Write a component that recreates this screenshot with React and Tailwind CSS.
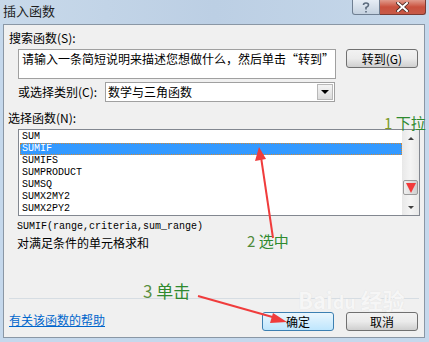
import React from 'react'

const functions = ['SUM', 'SUMIF', 'SUMIFS', 'SUMPRODUCT', 'SUMSQ', 'SUMX2MY2', 'SUMX2PY2']

export default function App() {
  return (
    <div className="relative w-[429px] h-[342px] overflow-hidden bg-[#c5d8ec] font-['Noto_Sans_CJK_SC','Liberation_Sans',sans-serif] text-[12px] leading-[16px] text-black">
      <TitleBar />

      <div className="ml-[3px] w-[422px] h-[314px] border border-[#8a97a5] bg-[#f0f0f0] flex flex-col">
        <div className="pl-[5px] mt-[5px]">搜索函数(S):</div>
        <div className="flex items-start pl-[14px] mt-[3px]">
          <div className="w-[318px] h-[30px] border border-[#a0a0a0] bg-white pl-[3px] pt-[1px] whitespace-nowrap overflow-hidden">
            请输入一条简短说明来描述您想做什么，然后单击“转到”
          </div>
          <Button className="ml-[10px]">转到(G)</Button>
        </div>

        <div className="flex items-center pl-[14px] mt-[3px]">
          <span className="w-[87px]">或选择类别(C):</span>
          <div className="w-[230px] h-[20px] border border-[#a0a0a0] bg-white flex items-center">
            <span className="pl-[2px] flex-1">数学与三角函数</span>
            <div className="w-[16px] h-[16px] mr-[1px] border border-[#b8b8b8] bg-gradient-to-b from-[#f4f4f4] to-[#dcdcdc] flex items-center justify-center">
              <div className="w-0 h-0 border-l-[4px] border-r-[4px] border-t-[4px] border-l-transparent border-r-transparent border-t-black" />
            </div>
          </div>
        </div>

        <div className="pl-[4px] mt-[8px]">选择函数(N):</div>

        <div className="ml-[14px] mt-[3px] w-[402px] h-[87px] border border-[#828790] bg-white flex">
          <div className="flex-1 pl-[1px] pt-[1px]">
            {functions.map((name) => (
              <div
                key={name}
                className={`h-[12px] pl-[2px] font-['Liberation_Mono',monospace] text-[10px] leading-[12px] ${
                  name === 'SUMIF' ? 'bg-[#3399ff] text-white outline-1 outline-dotted outline-[#d08a3a] -outline-offset-1' : ''
                }`}
              >
                {name}
              </div>
            ))}
          </div>
          <Scrollbar />
        </div>

        <div className="pl-[13px] mt-[4px] font-['Liberation_Mono',monospace] text-[10px] leading-[14px]">
          SUMIF(range,criteria,sum_range)
        </div>
        <div className="pl-[13px] mt-[1px]">对满足条件的单元格求和</div>

        <div className="mt-auto mx-[5px] h-px bg-[#d6dde3]" />
        <div className="flex items-start mt-[13px] mb-[6px] pl-[5px] pr-[6px]">
          <a className="text-[#0066cc] underline">有关该函数的帮助</a>
          <Button className="ml-auto" primary>确定</Button>
          <Button className="ml-[12px]">取消</Button>
        </div>
      </div>

      <Annotations />
    </div>
  )
}

function TitleBar() {
  return (
    <div className="h-[24px] flex items-start bg-gradient-to-r from-[#c8d9ea] via-[#bccfe4] to-[#c6d8ea]">
      <span className="ml-[3px] mt-[3px] text-[13px] leading-[16px] text-[#1e1e1e]">插入函数</span>
      <div className="ml-auto mr-[3px] flex">
        <div className="w-[28px] h-[15px] rounded-bl-[3px] border border-t-0 border-[#6f7f92] bg-gradient-to-b from-[#e6edf5] to-[#c4d1df] flex items-center justify-center">
          <svg width="8" height="11" viewBox="0 0 8 11">
            <path d="M1.5 3 Q1.5 1 4 1 Q6.5 1 6.5 3 Q6.5 4.5 4 5.5 L4 7.5 M4 9 L4 10.5" stroke="#5a6a7c" strokeWidth="1.6" fill="none" />
          </svg>
        </div>
        <div className="w-[46px] h-[15px] rounded-br-[3px] border border-l-0 border-t-0 border-[#7a3a32] bg-gradient-to-b from-[#e09a8c] via-[#c9503d] to-[#c75a48] flex items-center justify-center">
          <svg width="13" height="10" viewBox="0 0 13 10">
            <path d="M2 1 L11 9 M11 1 L2 9" stroke="#4a2a25" strokeWidth="3.6" strokeLinecap="square" />
            <path d="M2 1 L11 9 M11 1 L2 9" stroke="#ffffff" strokeWidth="2" strokeLinecap="square" />
          </svg>
        </div>
      </div>
    </div>
  )
}

function Button({ children, className = '', primary = false }) {
  return (
    <div
      className={`w-[72px] h-[19px] rounded-[3px] border flex items-center justify-center ${
        primary
          ? 'border-[#3c7fb1] bg-gradient-to-b from-[#eaf6fd] to-[#bee6fd]'
          : 'border-[#707070] bg-gradient-to-b from-[#f2f2f2] via-[#ebebeb] to-[#cfcfcf]'
      } ${className}`}
    >
      {children}
    </div>
  )
}

function Scrollbar() {
  return (
    <div className="w-[17px] h-full bg-gradient-to-r from-[#e8e8e8] via-[#f4f4f4] to-[#e8e8e8] flex flex-col items-center">
      <div className="h-[16px] flex items-center justify-center">
        <div className="w-0 h-0 border-l-[3px] border-r-[3px] border-b-[3px] border-l-transparent border-r-transparent border-b-[#404040]" />
      </div>
      <div className="h-[34px]" />
      <div className="w-[15px] h-[15px] rounded-[2px] border border-[#9a9a9a] bg-gradient-to-r from-[#f0f0f0] to-[#cfcfcf]" />
      <div className="flex-1" />
      <div className="h-[16px] flex items-center justify-center">
        <div className="w-0 h-0 border-l-[3px] border-r-[3px] border-t-[3px] border-l-transparent border-r-transparent border-t-[#404040]" />
      </div>
    </div>
  )
}

function Annotations() {
  return (
    <>
      <div className="absolute left-[384px] top-[114px] text-[15px] leading-[18px] text-[#2f8a2f] whitespace-nowrap">
        <span className="text-[#7d9a28]">1</span> 下拉
      </div>
      <div className="absolute left-[247px] top-[232px] text-[15px] leading-[18px] text-[#2f8a2f] whitespace-nowrap">
        <span className="text-[#4f8a3a]">2</span> 选中
      </div>
      <div className="absolute left-[143px] top-[281px] text-[17px] leading-[20px] text-[#2f8a2f] whitespace-nowrap">
        <span className="text-[#5a8f3f]">3</span> 单击
      </div>
      <div className="absolute left-[298px] top-[289px] text-[22px] leading-[20px] font-bold text-[#f6f6f6] [text-shadow:0_0_1px_#dcdcdc] whitespace-nowrap">
        Bai<span className="text-[18px]">du</span> 经验
      </div>

      <svg className="absolute left-0 top-0" width="429" height="342" viewBox="0 0 429 342">
        <defs>
          <linearGradient id="fade" x1="0" y1="0" x2="0" y2="1">
            <stop offset="0" stopColor="#ff4040" stopOpacity="0.2" />
            <stop offset="1" stopColor="#ff3333" stopOpacity="1" />
          </linearGradient>
        </defs>
        <path d="M411 148 L411 184" stroke="url(#fade)" strokeWidth="2.5" />
        <path d="M406 183 L411 193 L416 183 Z" fill="#f23a3a" />

        <path d="M273 238 L261 157" stroke="#f03c3c" strokeWidth="2" />
        <path d="M259 147 L255 161 L266 159 Z" fill="#f03c3c" />

        <path d="M198 296 L276 318" stroke="#f03c3c" strokeWidth="2" />
        <path d="M287 322 L273 313 L270 323 Z" fill="#f03c3c" />
      </svg>
    </>
  )
}
